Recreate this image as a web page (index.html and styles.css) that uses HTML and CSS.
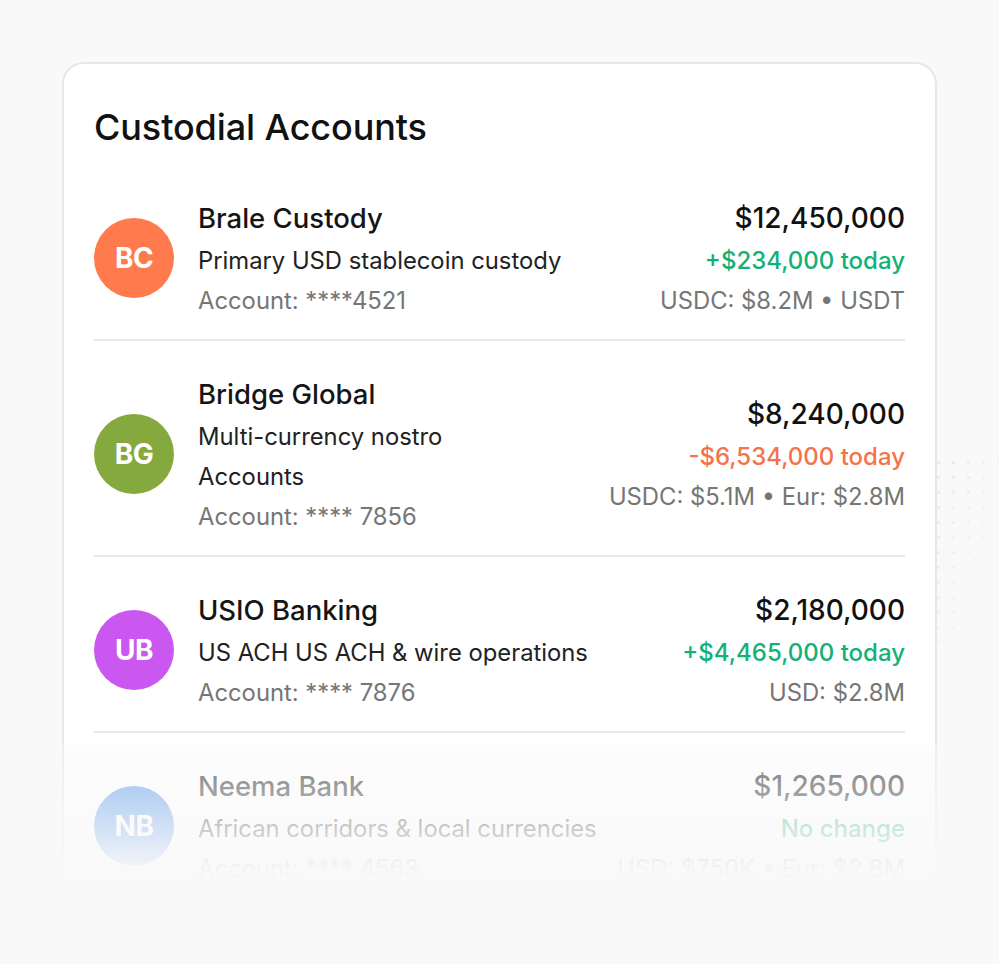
FILE: index.html
```html
<!DOCTYPE html>
<html lang="en">
<head>
<meta charset="utf-8">
<title>Custodial Accounts</title>
<link rel="stylesheet" href="styles.css">
</head>
<body>
<div class="stage">
  <div class="dots"></div>
  <section class="card">
    <h1 class="title">Custodial Accounts</h1>
    <ul class="list">
      <li class="row">
        <div class="avatar av-bc">BC</div>
        <div class="info">
          <div class="name">Brale Custody</div>
          <div class="desc">Primary USD stablecoin custody</div>
          <div class="meta">Account: ****4521</div>
        </div>
        <div class="figures">
          <div class="amount">$12,450,000</div>
          <div class="change up">+$234,000 today</div>
          <div class="meta">USDC: $8.2M • USDT</div>
        </div>
      </li>
      <li class="row">
        <div class="avatar av-bg">BG</div>
        <div class="info">
          <div class="name">Bridge Global</div>
          <div class="desc">Multi-currency nostro</div>
          <div class="desc">Accounts</div>
          <div class="meta">Account: **** 7856</div>
        </div>
        <div class="figures">
          <div class="amount">$8,240,000</div>
          <div class="change down">-$6,534,000 today</div>
          <div class="meta">USDC: $5.1M • Eur: $2.8M</div>
        </div>
      </li>
      <li class="row">
        <div class="avatar av-ub">UB</div>
        <div class="info">
          <div class="name">USIO Banking</div>
          <div class="desc">US ACH US ACH &amp; wire operations</div>
          <div class="meta">Account: **** 7876</div>
        </div>
        <div class="figures">
          <div class="amount">$2,180,000</div>
          <div class="change up">+$4,465,000 today</div>
          <div class="meta">USD: $2.8M</div>
        </div>
      </li>
      <li class="row">
        <div class="avatar av-nb">NB</div>
        <div class="info">
          <div class="name">Neema Bank</div>
          <div class="desc">African corridors &amp; local currencies</div>
          <div class="meta">Account: **** 4563</div>
        </div>
        <div class="figures">
          <div class="amount">$1,265,000</div>
          <div class="change up">No change</div>
          <div class="meta">USD: $750K • Eur: $2.8M</div>
        </div>
      </li>
    </ul>
  </section>
  <div class="fade"></div>
</div>
</body>
</html>
```

FILE: styles.css
```css
* { box-sizing: border-box; }

html, body {
  margin: 0;
  padding: 0;
  background: #f9f9f9;
  font-family: Inter, "Noto Sans", "Liberation Sans", sans-serif;
  color: #111;
}

.stage {
  position: relative;
  width: 999px;
  height: 964px;
  overflow: hidden;
  padding: 62px 62px 0 62px;
}

.card {
  background: #fff;
  border: 2px solid #e7e7e7;
  border-radius: 22px;
  padding: 30px 30px 40px 30px;
  width: 875px;
}

.title {
  margin: 0;
  font-size: 36px;
  line-height: 66px;
  font-weight: 500;
  color: #111;
  letter-spacing: -0.1px;
}

.list {
  list-style: none;
  margin: 0;
  padding: 0;
}

.row {
  display: flex;
  align-items: center;
  padding: 30px 0 18px 0;
  border-bottom: 2px solid #e8e8e8;
}
.row:first-child { padding-top: 35px; }

.avatar {
  flex: 0 0 80px;
  width: 80px;
  height: 80px;
  margin-right: 24px;
  border-radius: 50%;
  display: flex;
  align-items: center;
  justify-content: center;
  color: #fff;
  font-size: 28px;
  font-weight: 700;
  letter-spacing: -0.5px;
}
.av-bc { background: #ff7a4d; }
.av-bg { background: #85a93e; }
.av-ub { background: #c957f0; }
.av-nb { background: #4a8fe6; }

.info {
  flex: 1 1 auto;
  min-width: 0;
  white-space: nowrap;
}

.name {
  font-size: 27.5px;
  line-height: 46px;
  font-weight: 500;
  color: #151515;
}
.desc {
  font-size: 23.8px;
  line-height: 40px;
  color: #222;
}
.meta {
  font-size: 23.8px;
  line-height: 40px;
  color: #767676;
}

.figures {
  flex: 0 0 auto;
  margin-left: 12px;
  text-align: right;
  white-space: nowrap;
}
.amount {
  font-size: 28px;
  line-height: 46px;
  font-weight: 500;
  color: #111;
}
.change {
  font-size: 24px;
  line-height: 40px;
  font-weight: 500;
}
.change.up { color: #12b176; }
.change.down { color: #f47349; }

.fade {
  position: absolute;
  left: 0;
  right: 0;
  top: 745px;
  bottom: 0;
  background: linear-gradient(to bottom,
    rgba(249, 249, 249, 0.4) 0px,
    rgba(249, 249, 249, 0.97) 125px,
    rgba(249, 249, 249, 1) 140px);
}

.dots {
  position: absolute;
  left: 936px;
  top: 455px;
  width: 63px;
  height: 200px;
  background-image: radial-gradient(circle, #e9e9e9 1.3px, transparent 1.8px);
  background-size: 15px 15px;
  background-position: -5px 0;
  -webkit-mask-image: linear-gradient(to bottom right, #000 10%, transparent 75%);
  mask-image: linear-gradient(to bottom right, #000 10%, transparent 75%);
}
```
